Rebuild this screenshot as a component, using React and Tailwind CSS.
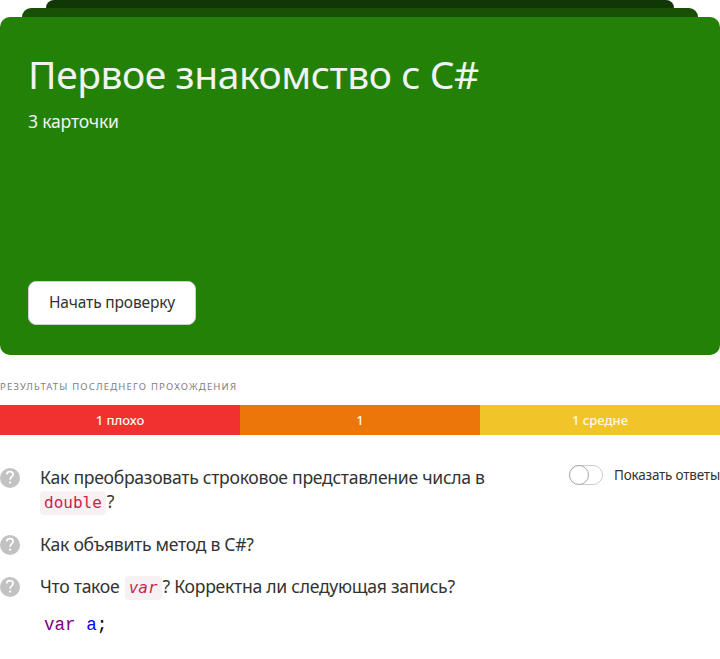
const results = [
  { label: '1 плохо', color: 'bg-[#f13030]' },
  { label: '1', color: 'bg-[#ec7609]' },
  { label: '1 средне', color: 'bg-[#f1c428]' },
];

function HelpIcon() {
  return (
    <svg className="mt-[3px] h-5 w-5 shrink-0" viewBox="0 0 20 20" fill="none">
      <circle cx="10" cy="10" r="10" fill="#c2c2c2" />
      <path d="M6.700 6.300C6.900 4.400 8.200 3.600 10 3.600c1.900 0 3.100 1 3.100 2.700 0 1.300-.7 1.900-1.500 2.600-.9.8-1.500 1.400-1.500 2.900" stroke="#fff" strokeWidth="1.700" />
      <circle cx="10.100" cy="14.600" r="1.150" fill="#fff" />
    </svg>
  );
}

function Code({ children, className }) {
  return (
    <code className={`inline-block h-6 rounded-[4px] bg-[#f8f1f3] px-1 font-['DejaVu_Sans_Mono',monospace] text-[16px] leading-6 tracking-normal text-[#c7254e] ${className ?? ''}`}>
      {children}
    </code>
  );
}

function Question({ children, className }) {
  return (
    <div className={`flex gap-5 ${className ?? ''}`}>
      <HelpIcon />
      <div className="text-[17.600px] leading-6 tracking-[-0.285px]">{children}</div>
    </div>
  );
}

export default function App() {
  return (
    <div className="h-[659px] w-[720px] overflow-hidden bg-white font-['Noto_Sans',sans-serif] text-[#333]">
      <div className="mx-auto h-2 w-[628px] rounded-t-[8px] bg-[#113706]" />
      <div className="mx-auto h-[9px] w-[676px] rounded-t-[9px] bg-[#185006]" />
      <section className="flex h-[338px] flex-col items-start rounded-[10px] bg-[#238108] px-7 pb-[30px] pt-[29px] text-[#f2f2f2]">
        <h1 className="whitespace-nowrap text-[39px] font-normal leading-[56px] tracking-[-0.430px]">Первое знакомство с C#</h1>
        <p className="mt-[7px] text-[17.600px] leading-6 tracking-[-0.200px]">3 карточки</p>
        <button className="mt-auto h-11 w-[168px] whitespace-nowrap rounded-[8px] border border-[#d0d0d0] bg-white text-[15.500px] tracking-[-0.150px] text-[#333]">
          Начать проверку
        </button>
      </section>
      <h2 className="mt-6 h-[15px] whitespace-nowrap text-[9.500px] leading-[15px] tracking-[1.180px] text-[#808080]">
        РЕЗУЛЬТАТЫ ПОСЛЕДНЕГО ПРОХОЖДЕНИЯ
      </h2>
      <div className="mt-[11px] grid h-[30px] grid-cols-3 text-center text-[13px] font-medium leading-[30px] text-[#fdf8ef]">
        {results.map((r) => (
          <div key={r.label} className={r.color}>{r.label}</div>
        ))}
      </div>
      <div className="mt-[30px] flex justify-between">
        <div className="w-[500px]">
          <Question>
            <span className="whitespace-nowrap">Как преобразовать строковое представление числа в</span>
            <br />
            <Code>double</Code>
            <span className="ml-px">?</span>
          </Question>
          <Question className="mt-[17px]">Как объявить метод в C#?</Question>
          <Question className="mt-[18px]">
            <span className="whitespace-nowrap">
              Что такое <Code className="ml-px italic">var</Code>
              <span className="ml-px">? Корректна ли следующая запись?</span>
            </span>
          </Question>
          <pre className="ml-[44px] mt-[13px] font-['Liberation_Mono',monospace] text-[17.600px] leading-6 text-black">
            <span className="text-[#800080]">var</span> <span className="text-[#0000ff]">a</span>;
          </pre>
        </div>
        <label className="flex h-5 items-center gap-[11px]">
          <span className="flex h-5 w-[34px] rounded-full border border-[#ccc]">
            <span className="-ml-px -mt-px h-5 w-5 rounded-full border border-[#aaa] bg-white" />
          </span>
          <span className="whitespace-nowrap text-[13.500px] tracking-[-0.200px]">Показать ответы</span>
        </label>
      </div>
    </div>
  );
}
